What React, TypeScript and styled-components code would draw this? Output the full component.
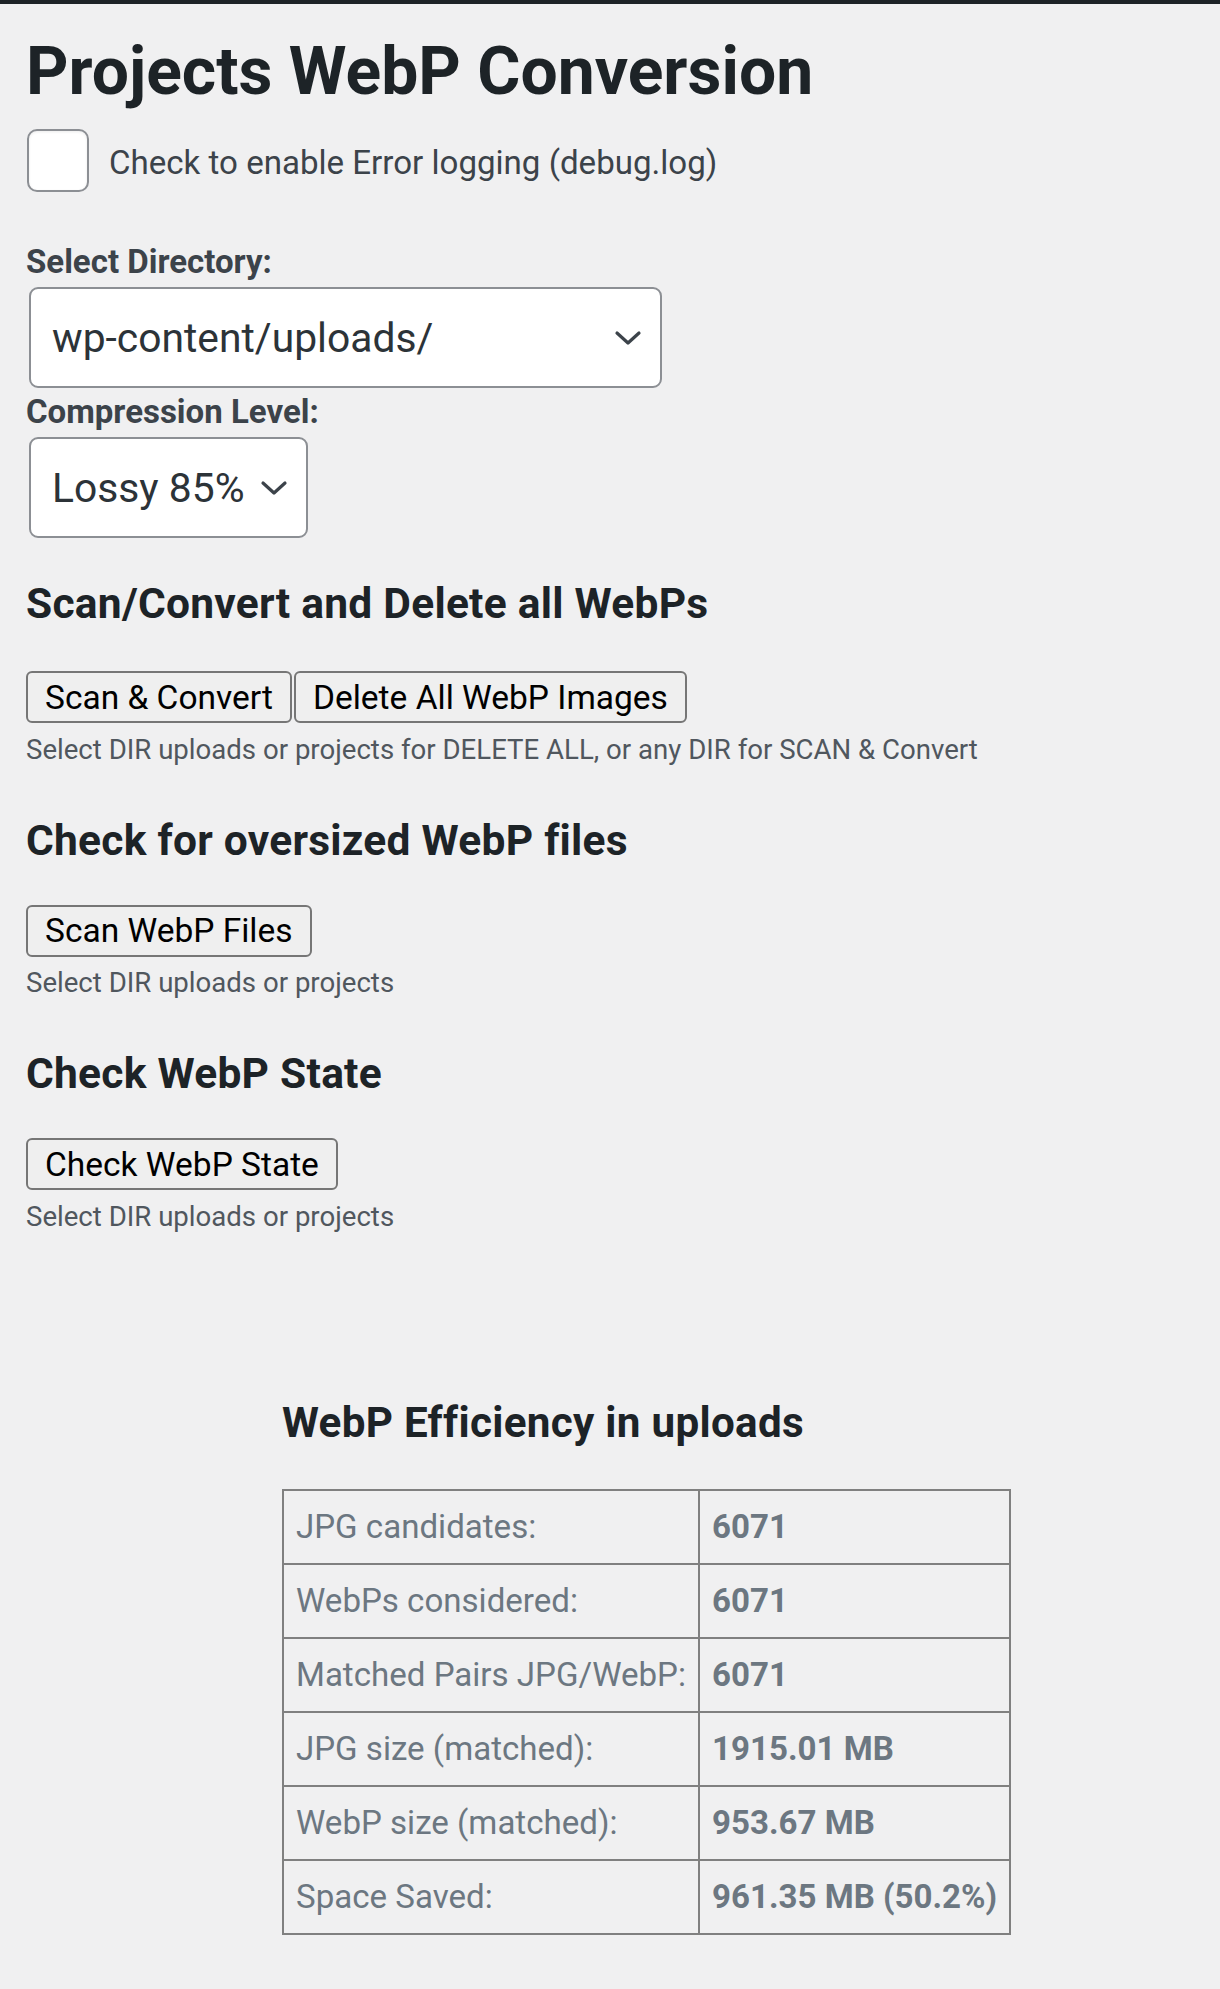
import React from 'react'
import styled, { createGlobalStyle } from 'styled-components'

const GlobalStyle = createGlobalStyle`
  html, body {
    margin: 0;
    padding: 0;
    background: #f0f0f1;
  }
  body {
    font-family: Roboto, "Noto Sans", Arial, sans-serif;
    color: #3c434a;
  }
`

const stats = [
  { label: 'JPG candidates:', value: '6071' },
  { label: 'WebPs considered:', value: '6071' },
  { label: 'Matched Pairs JPG/WebP:', value: '6071' },
  { label: 'JPG size (matched):', value: '1915.01 MB' },
  { label: 'WebP size (matched):', value: '953.67 MB' },
  { label: 'Space Saved:', value: '961.35 MB (50.2%)' },
]

const Chevron = () => (
  <svg width="28" height="16" viewBox="0 0 28 16" fill="none">
    <path d="M3 3 L14 13 L25 3" stroke="#3c434a" strokeWidth="3.2" strokeLinecap="round" strokeLinejoin="round" />
  </svg>
)

const App = () => {
  return (
    <Page>
      <GlobalStyle />
      <TopBar />
      <Wrap>
        <Title>Projects WebP Conversion</Title>
        <CheckRow>
          <Checkbox />
          <CheckLabel>Check to enable Error logging (debug.log)</CheckLabel>
        </CheckRow>

        <FieldLabel $first>Select Directory:</FieldLabel>
        <SelectBox $width="633px">
          <span>wp-content/uploads/</span>
          <Chevron />
        </SelectBox>
        <FieldLabel>Compression Level:</FieldLabel>
        <SelectBox>
          <span>Lossy 85%</span>
          <Chevron />
        </SelectBox>

        <Section>
          <SectionTitle>Scan/Convert and Delete all WebPs</SectionTitle>
          <ButtonRow>
            <Button>Scan &amp; Convert</Button>
            <Button>Delete All WebP Images</Button>
          </ButtonRow>
          <Description>Select DIR uploads or projects for DELETE ALL, or any DIR for SCAN &amp; Convert</Description>
        </Section>

        <Section>
          <SectionTitle>Check for oversized WebP files</SectionTitle>
          <ButtonRow>
            <Button>Scan WebP Files</Button>
          </ButtonRow>
          <Description>Select DIR uploads or projects</Description>
        </Section>

        <Section>
          <SectionTitle>Check WebP State</SectionTitle>
          <ButtonRow>
            <Button>Check WebP State</Button>
          </ButtonRow>
          <Description>Select DIR uploads or projects</Description>
        </Section>

        <Stats>
          <StatsTitle>WebP Efficiency in uploads</StatsTitle>
          <StatsTable>
            <tbody>
              {stats.map((s) => (
                <tr key={s.label}>
                  <LabelCell>{s.label}</LabelCell>
                  <ValueCell>{s.value}</ValueCell>
                </tr>
              ))}
            </tbody>
          </StatsTable>
        </Stats>
      </Wrap>
    </Page>
  )
}

export default App

const Page = styled.div`
  min-height: 1989px;
  background: #f0f0f1;
`

const TopBar = styled.div`
  height: 4px;
  background: #1d2327;
`

const Wrap = styled.div`
  padding: 28px 0 0 26px;
`

const Title = styled.h1`
  margin: 0;
  font-size: 66px;
  line-height: 79px;
  font-weight: 700;
  color: #1d2327;
`

const CheckRow = styled.div`
  display: flex;
  align-items: center;
  gap: 20px;
  margin-top: 18px;
`

const Checkbox = styled.div`
  width: 58px;
  height: 59px;
  margin-left: 1px;
  border: 2px solid #8c8f94;
  border-radius: 10px;
  background: #fff;
  box-shadow: inset 0 1px 3px rgba(0, 0, 0, 0.08);
`

const CheckLabel = styled.span`
  padding-top: 5px;
  font-size: 33.1px;
  line-height: 40px;
  color: #3c434a;
`

const FieldLabel = styled.div<{ $first?: boolean }>`
  margin-top: ${(p) => (p.$first ? '49px' : '3px')};
  font-size: 33px;
  line-height: 42px;
  font-weight: 700;
  color: #3c434a;
`

const SelectBox = styled.div<{ $width?: string }>`
  display: inline-flex;
  align-items: center;
  justify-content: space-between;
  gap: 15px;
  box-sizing: border-box;
  width: ${(p) => p.$width || 'auto'};
  height: 101px;
  margin: 4px 0 0 3px;
  padding: 0 18px 0 21px;
  border: 2px solid #8c8f94;
  border-radius: 9px;
  background: #fff;
  font-size: 40.8px;
  color: #2c3338;
`

const ButtonRow = styled.div`
  display: flex;
  gap: 2px;
  margin-top: 41px;
`

const Section = styled.div`
  margin-top: 39px;

  & + & {
    margin-top: 45px;
  }

  & + & ${ButtonRow} {
    margin-top: 38px;
  }
`

const SectionTitle = styled.h2`
  margin: 0;
  font-size: 42.5px;
  line-height: 53px;
  font-weight: 700;
  letter-spacing: 0.25px;
  color: #1d2327;
`

const Button = styled.button`
  height: 52px;
  padding: 0 17px;
  border: 2px solid #767676;
  border-radius: 6px;
  background: #efefef;
  font-family: Roboto, "Noto Sans", Arial, sans-serif;
  font-size: 33.5px;
  color: #000;
`

const Description = styled.p`
  margin: 7.5px 0 0;
  font-size: 27.6px;
  line-height: 38px;
  color: #50575e;
`

const Stats = styled.div`
  margin: 161px 0 0 256px;
`

const StatsTitle = styled.h3`
  margin: 0;
  font-size: 42.2px;
  line-height: 52px;
  font-weight: 700;
  letter-spacing: 0.3px;
  color: #1d2327;
`

const StatsTable = styled.table`
  margin-top: 40px;
  border-collapse: collapse;
  border: 2px solid #808080;
`

const LabelCell = styled.td`
  padding: 13px 12px;
  border: 2px solid #808080;
  font-size: 33.1px;
  line-height: 46px;
  color: #6c7781;
  white-space: nowrap;
`

const ValueCell = styled(LabelCell)`
  font-weight: 700;
`
